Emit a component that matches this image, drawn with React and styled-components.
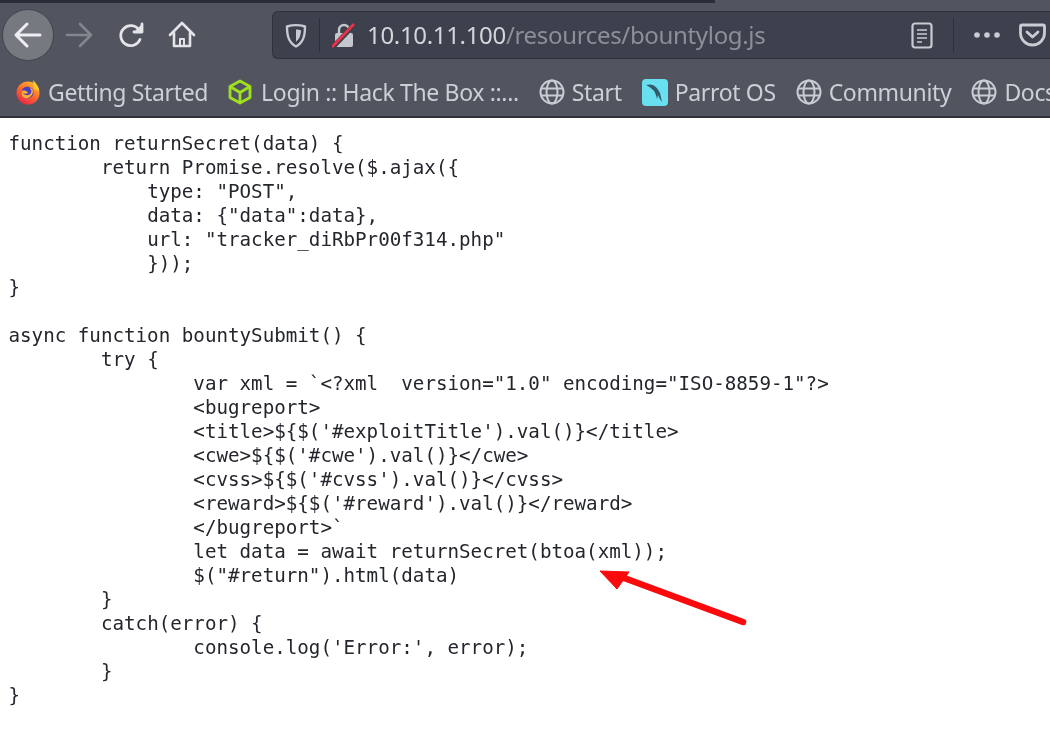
import React from "react";
import styled, { createGlobalStyle } from "styled-components";

const Global = createGlobalStyle`
  html, body { margin: 0; padding: 0; background: #fff; overflow: hidden; }
`;
const Page = styled.div`width: 1050px; height: 731px; overflow: hidden; background: #fff;`;
const Chrome = styled.header`
  height: 118px; background: #52555f; border-bottom: 2px solid #2f323b; box-sizing: border-box;
  display: flex; flex-direction: column; filter: blur(0.5px);
  font-family: "Noto Sans", "Open Sans", sans-serif;
`;
const TabStrip = styled.div`height: 3px; width: 715px; background: #2a2d36; flex: none;`;
const NavRow = styled.div`height: 54px; flex: none; display: flex; align-items: center; padding-left: 2px; margin-top: 5px;`;
const BackButton = styled.div`
  width: 52px; height: 52px; border-radius: 50%; background: #777981; border: 1px solid #43464f;
  box-sizing: border-box; display: flex; align-items: center; justify-content: center; flex: none;
`;
const NavIcon = styled.div`
  width: ${p => p.$width || 50}px; height: 40px; display: flex; align-items: center; justify-content: center; flex: none;
`;
const UrlBar = styled.div`
  margin-left: 67px; flex: 1; height: 48px; background: #3d414d; border: 1px solid #2f323b; border-right: none;
  border-radius: 6px 0 0 6px; box-sizing: border-box; display: flex; align-items: center; color: #d4d6db; font-size: 24px;
`;
const Shield = styled.div`width: 46px; display:flex; justify-content:center; flex:none;`;
const Sep = styled.div`width: 1px; height: 34px; background: #2d3039; flex: none; margin: ${p => p.$margin || 0};`;
const Lock = styled.div`width: 47px; display:flex; justify-content:center; flex:none;`;
const Url = styled.div`flex: 1; white-space: nowrap; margin-top: -1px; letter-spacing: -0.33px;`;
const UrlDim = styled.span`color: #8b8f9a;`;
const ActionIcons = styled.div`display:flex; align-items:center; flex:none;`;
const BookmarkRow = styled.nav`
  flex: 1; display: flex; align-items: center; padding-left: 15px; gap: 20px; white-space: nowrap; overflow: hidden;
  color: #ccd0d6; font-size: 23px; margin-top: 6px; letter-spacing: -0.35px;
`;
const Bookmark = styled.div`display: flex; align-items: center; gap: ${p => p.$gap || 7}px; flex: none;`;
const Code = styled.pre`
  margin: 0; padding: 14px 0 0 8.5px; font-family: "DejaVu Sans Mono", monospace; font-size: 19.2px; line-height: 24px;
  color: #23262c; tab-size: 8; filter: blur(0.4px);
`;
const Arrow = styled.svg`position: absolute; left: 591px; top: 561px;`;

const Globe = () => (
  <svg width="26" height="26" viewBox="0 0 26 26" fill="none" stroke="#c9ccd2" strokeWidth="2">
    <circle cx="13" cy="13" r="11.5" />
    <ellipse cx="13" cy="13" rx="5.5" ry="11.5" />
    <path d="M2 9.5h22M2 16.5h22" />
  </svg>
);

const code = `function returnSecret(data) {
\treturn Promise.resolve($.ajax({
\t    type: "POST",
\t    data: {"data":data},
\t    url: "tracker_diRbPr00f314.php"
\t    }));
}

async function bountySubmit() {
\ttry {
\t\tvar xml = \`<?xml  version="1.0" encoding="ISO-8859-1"?>
\t\t<bugreport>
\t\t<title>\${$('#exploitTitle').val()}</title>
\t\t<cwe>\${$('#cwe').val()}</cwe>
\t\t<cvss>\${$('#cvss').val()}</cvss>
\t\t<reward>\${$('#reward').val()}</reward>
\t\t</bugreport>\`
\t\tlet data = await returnSecret(btoa(xml));
\t\t$("#return").html(data)
\t}
\tcatch(error) {
\t\tconsole.log('Error:', error);
\t}
}`;

export default function App() {
  return (
    <Page>
      <Global />
      <Chrome>
        <TabStrip />
        <NavRow>
          <BackButton>
            <svg width="30" height="28" viewBox="0 0 30 28" fill="none" stroke="#eceef0" strokeWidth="3" strokeLinecap="round" strokeLinejoin="round">
              <path d="M3 14h24M14 3 3 14l11 11" />
            </svg>
          </BackButton>
          <NavIcon>
            <svg width="28" height="26" viewBox="0 0 28 26" fill="none" stroke="#83868e" strokeWidth="2.6" strokeLinecap="round" strokeLinejoin="round">
              <path d="M2 13h24M15 2l11 11-11 11" />
            </svg>
          </NavIcon>
          <NavIcon $width={54}>
            <svg width="27" height="27" viewBox="0 0 27 27" fill="none" stroke="#e2e4e8" strokeWidth="2.8" strokeLinecap="round" strokeLinejoin="round">
              <path d="M22 17.5a10 10 0 1 1-1-9.5" />
              <path d="M24 2v8h-8" fill="#e2e4e8" />
            </svg>
          </NavIcon>
          <NavIcon $width={47}>
            <svg width="28" height="28" viewBox="0 0 28 28" fill="none" stroke="#e2e4e8" strokeWidth="2.6" strokeLinejoin="round" strokeLinecap="round">
              <path d="M2 14 14 2l12 12M6 12v13h16V12" />
              <path d="M12 25v-7h4v7" strokeWidth="2" />
            </svg>
          </NavIcon>
          <UrlBar>
            <Shield>
              <svg width="22" height="25" viewBox="0 0 22 25" fill="none" stroke="#c6c9cf" strokeWidth="2.4" strokeLinejoin="round">
                <path d="M2 3.500C7 2 15 2 20 3.500c0 9-1.500 16-9 20C3.500 19.500 2 12.500 2 3.500Z" />
                <path d="M11 6.500c2 0 3.500.3 5 .7 0 5-1.500 9-5 11.500Z" fill="#c6c9cf" stroke="none" />
              </svg>
            </Shield>
            <Sep />
            <Lock>
              <svg width="24" height="26" viewBox="0 0 24 26">
                <path d="M7 12V8a5 5 0 0 1 10 0v4" fill="none" stroke="#c4c7cd" strokeWidth="2.4" />
                <rect x="3" y="11" width="18" height="14" rx="2" fill="#c4c7cd" />
                <path d="M1 25 23 2" stroke="#3d414d" strokeWidth="5" />
                <path d="M0 25 22 2" stroke="#ee3048" strokeWidth="2.6" />
              </svg>
            </Lock>
            <Url>10.10.11.100<UrlDim>/resources/bountylog.js</UrlDim></Url>
            <ActionIcons>
              <svg width="22" height="27" viewBox="0 0 22 27" fill="none" stroke="#c9ccd2" strokeWidth="2.2">
                <rect x="1.500" y="1.500" width="19" height="24" rx="2.500" />
                <path d="M6 8h10M6 12h10M6 16h10M6 20h5" strokeWidth="1.600" />
              </svg>
              <Sep $margin="0 20px" />
              <svg width="26" height="6" viewBox="0 0 26 6" fill="#c9ccd2">
                <circle cx="3" cy="3" r="2.800" /><circle cx="13" cy="3" r="2.800" /><circle cx="23" cy="3" r="2.800" />
              </svg>
              <svg width="27" height="24" viewBox="0 0 27 24" fill="none" stroke="#c9ccd2" strokeWidth="2.800" strokeLinecap="round" strokeLinejoin="round" style={{ marginLeft: 19, marginRight: 4 }}>
                <path d="M3 2h21a1.500 1.500 0 0 1 1.500 1.500V10a12 12 0 0 1-24 0V3.500A1.500 1.500 0 0 1 3 2Z" />
                <path d="m8 9 5.500 5L19 9" />
              </svg>
            </ActionIcons>
          </UrlBar>
        </NavRow>
        <BookmarkRow>
          <Bookmark>
            <svg width="26" height="26" viewBox="0 0 26 26">
              <defs>
                <linearGradient id="fx" x1="0.800" y1="0" x2="0.200" y2="1">
                  <stop offset="0" stopColor="#ffbd2e" /><stop offset="0.500" stopColor="#ff6a2a" /><stop offset="1" stopColor="#e3204f" />
                </linearGradient>
              </defs>
              <circle cx="13" cy="14" r="11.500" fill="url(#fx)" />
              <path d="M18 1c3 3 6 7 6 11l-5-2Z" fill="#ffc62e" />
              <circle cx="12.500" cy="13.500" r="6" fill="#4b3fc0" />
              <path d="M7 12c3-1 5 0 6 2-1 1-3 1-5 0 2 3 6 3 8 0 1-2 0-4-2-6 3 1 4 3 4 5-1 5-5 7-8 6-3-1-4-4-3-7Z" fill="#ffb02e" />
            </svg>
            Getting Started
          </Bookmark>
          <Bookmark $gap={9}>
            <svg width="24" height="26" viewBox="0 0 24 26" fill="none" stroke="#9fe01f" strokeWidth="2.800" strokeLinejoin="round">
              <path d="M12 2 22 7.500v11L12 24 2 18.500v-11Z" />
              <path d="m2 7.500 10 6 10-6M12 13.500V24" />
            </svg>
            Login :: Hack The Box ::...
          </Bookmark>
          <Bookmark>
            <Globe />
            Start
          </Bookmark>
          <Bookmark>
            <svg width="26" height="27" viewBox="0 0 26 27">
              <rect width="26" height="27" rx="4" fill="#69e0ef" />
              <path d="M4 6c6-2 11 1 14 8l2 9c-2-2-3-5-4-7l-1 4c-1-4-2-8-5-10-2-2-4-3-6-4Z" fill="#355b6b" />
            </svg>
            Parrot OS
          </Bookmark>
          <Bookmark>
            <Globe />
            Community
          </Bookmark>
          <Bookmark>
            <Globe />
            Docs
          </Bookmark>
        </BookmarkRow>
      </Chrome>
      <Code>{code}</Code>
      <Arrow width="170" height="80" viewBox="0 0 170 80">
        <path d="M152 61 25 14" stroke="#f90a0c" strokeWidth="6.500" strokeLinecap="round" fill="none" />
        <path d="M9 10 38 11 26 28Z" fill="#f90a0c" stroke="#f90a0c" strokeWidth="1" strokeLinejoin="round" />
      </Arrow>
    </Page>
  );
}
